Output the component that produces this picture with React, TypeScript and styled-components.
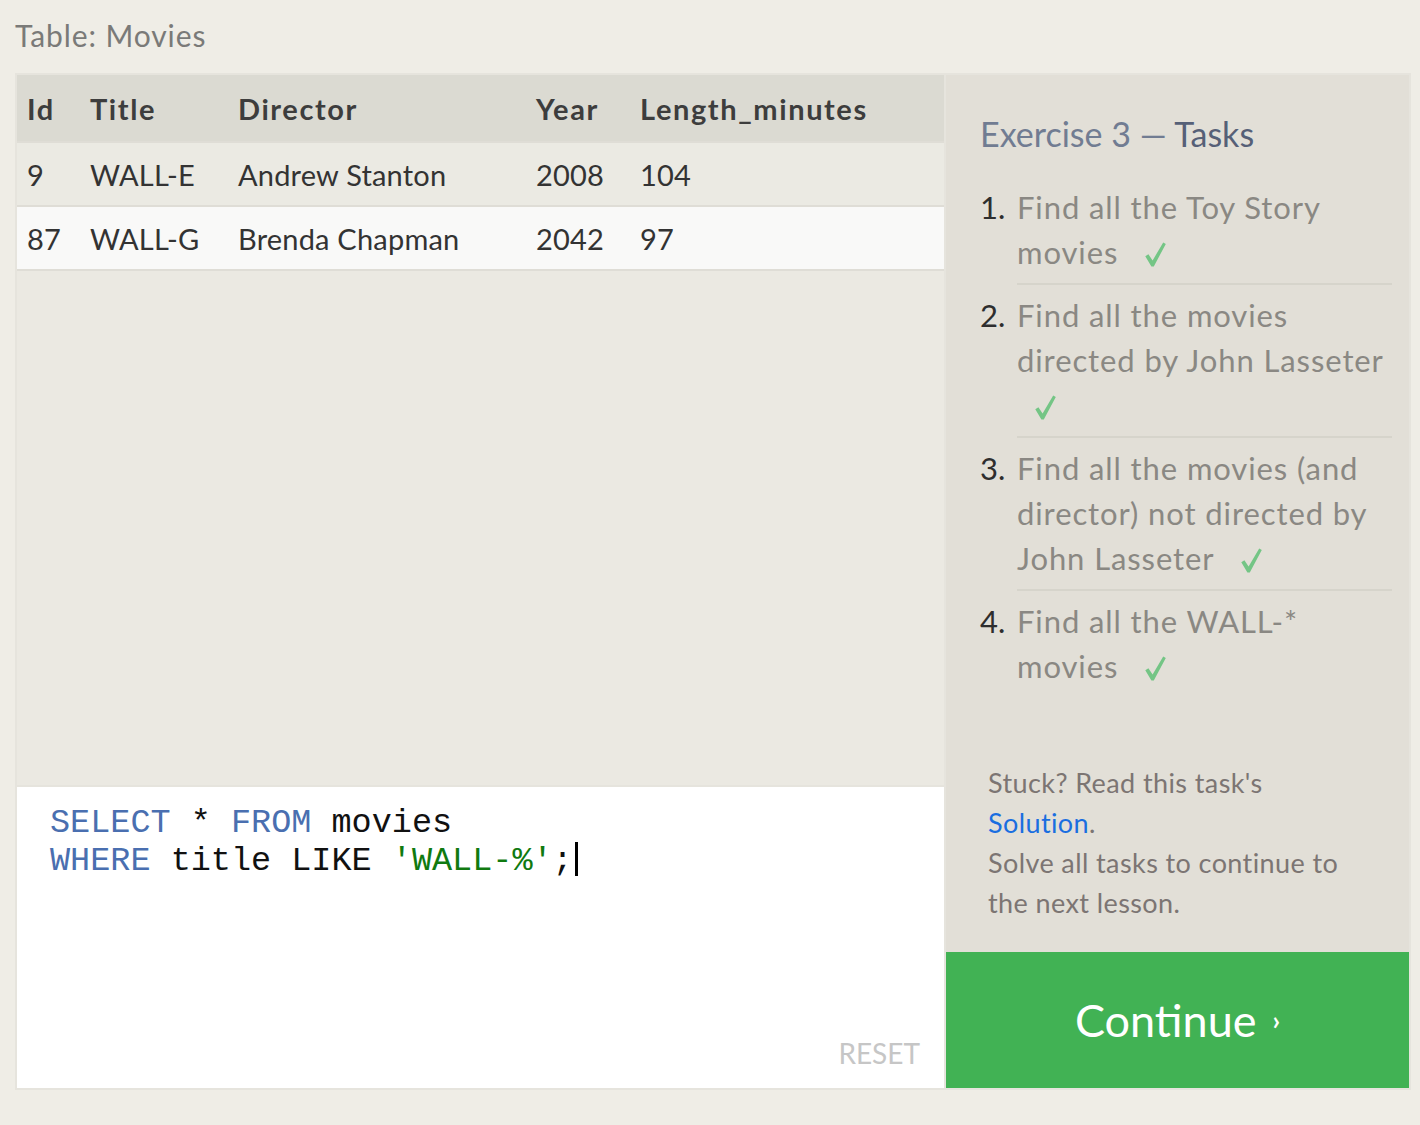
import React from "react";
import styled, { createGlobalStyle } from "styled-components";

const Global = createGlobalStyle`
  html, body { margin: 0; padding: 0; }
  body {
    background: #efede6;
    font-family: Lato, "Open Sans", sans-serif;
    width: 1420px;
    height: 1125px;
    overflow: hidden;
  }
`;

const Page = styled.div`
  padding: 14px 0 0 15px;
`;

const Caption = styled.div`
  font-size: 30px;
  letter-spacing: 0.9px;
  line-height: 42px;
  color: #7a7a78;
  height: 59px;
`;

const Frame = styled.div`
  width: 1392px;
  height: 1013px;
  border: 2px solid #e6e4dd;
  background: #e6e4dd;
  display: flex;
  gap: 2px;
`;

const LeftPanel = styled.div`
  width: 927px;
  display: flex;
  flex-direction: column;
  background: #ebe9e2;
`;

const Table = styled.table`
  width: 100%;
  border-collapse: collapse;
  font-size: 29px;
  color: #333;
`;

const HeadCell = styled.th<{ $w?: number }>`
  text-align: left;
  font-weight: 700;
  letter-spacing: 1.6px;
  background: #dbdad2;
  height: 66px;
  padding: 0 0 0 10px;
  width: ${(p) => (p.$w ? `${p.$w}px` : "auto")};
  color: #3d3d3d;
`;

const Row = styled.tr<{ $light?: boolean }>`
  background: ${(p) => (p.$light ? "#f9f9f8" : "#ebeae3")};
  border-top: 2px solid #dfddd6;
`;

const Cell = styled.td`
  height: 62px;
  padding: 0 0 0 10px;
  letter-spacing: 0.2px;
`;

const Empty = styled.div`
  flex: 1;
  border-top: 2px solid #dfddd6;
`;

const Editor = styled.div`
  height: 303px;
  background: #ffffff;
  border-top: 2px solid #e6e4dd;
  box-sizing: border-box;
  padding: 17px 24px 18px 33px;
  display: flex;
  flex-direction: column;
`;

const Code = styled.pre`
  margin: 0;
  flex: 1;
  font-family: "Liberation Mono", "Courier New", monospace;
  font-size: 33.5px;
  line-height: 38px;
  color: #111;
`;

const Kw = styled.span`
  color: #4a6fb0;
`;

const Str = styled.span`
  color: #107a10;
`;

const Caret = styled.span`
  display: inline-block;
  width: 3px;
  height: 34px;
  background: #000;
  vertical-align: -6px;
  margin-left: 2px;
`;

const Reset = styled.div`
  align-self: flex-end;
  font-size: 28px;
  color: #c6c6c6;
`;

const RightPanel = styled.div`
  flex: 1;
  display: flex;
  flex-direction: column;
  background: #e2dfd7;
`;

const TaskArea = styled.div`
  padding: 36px 17px 0 34px;
  flex: 1;
`;

const Heading = styled.h2`
  margin: 0 0 20px 0;
  font-size: 34px;
  font-weight: 400;
  line-height: 46px;
  color: #717c92;
`;

const HeadingStrong = styled.span`
  color: #566077;
`;

const List = styled.ol`
  margin: 0;
  padding: 0;
  list-style: none;
`;

const Item = styled.li<{ $last?: boolean }>`
  display: flex;
  font-size: 31px;
  letter-spacing: 0.9px;
  line-height: 45px;
  padding: 8px 0 ${(p) => (p.$last ? "0" : "8px")} 0;
`;

const Num = styled.span`
  width: 37px;
  flex: none;
  color: #2e2e2e;
  letter-spacing: 0;
`;

const ItemText = styled.span<{ $last?: boolean }>`
  flex: 1;
  color: #8a8883;
  padding-bottom: 8px;
  border-bottom: ${(p) => (p.$last ? "none" : "2px solid #d6d4cb")};
  margin-bottom: -8px;
`;

const CheckIcon = styled.svg`
  display: inline-block;
  margin-left: 18px;
  width: 21px;
  height: 25px;
  vertical-align: -3px;
`;

const Check = () => (
  <CheckIcon viewBox="0 0 21 25" aria-hidden="true">
    <path d="M0.3 14.2 L3.4 12.2 L7.6 18.4 L18.2 0.6 L20.8 2 L8.8 24.4 L6.4 24.4 Z" fill="#74c585" />
  </CheckIcon>
);

const Help = styled.div`
  padding: 0 51px 29px 42px;
  font-size: 27px;
  letter-spacing: 0.4px;
  line-height: 40px;
  color: #7c7573;
`;

const SolutionLink = styled.a`
  color: #1a6ee0;
  text-decoration: none;
`;

const ContinueButton = styled.div`
  height: 136px;
  background: #41b254;
  color: #ffffff;
  display: flex;
  align-items: center;
  justify-content: center;
  font-size: 45px;
  gap: 16px;
`;

const Chevron = styled.span`
  font-size: 26px;
  font-weight: 700;
`;

const tasks: { n: number; text: string }[] = [
  { n: 1, text: "Find all the Toy Story movies" },
  { n: 2, text: "Find all the movies directed by John Lasseter" },
  { n: 3, text: "Find all the movies (and director) not directed by John Lasseter" },
  { n: 4, text: "Find all the WALL-* movies" },
];

export default function App() {
  return (
    <Page>
      <Global />
      <Caption>Table: Movies</Caption>
      <Frame>
        <LeftPanel>
          <Table>
            <thead>
              <tr>
                <HeadCell $w={53}>Id</HeadCell>
                <HeadCell $w={138}>Title</HeadCell>
                <HeadCell $w={288}>Director</HeadCell>
                <HeadCell $w={94}>Year</HeadCell>
                <HeadCell>Length_minutes</HeadCell>
              </tr>
            </thead>
            <tbody>
              <Row>
                <Cell>9</Cell>
                <Cell>WALL-E</Cell>
                <Cell>Andrew Stanton</Cell>
                <Cell>2008</Cell>
                <Cell>104</Cell>
              </Row>
              <Row $light>
                <Cell>87</Cell>
                <Cell>WALL-G</Cell>
                <Cell>Brenda Chapman</Cell>
                <Cell>2042</Cell>
                <Cell>97</Cell>
              </Row>
            </tbody>
          </Table>
          <Empty />
          <Editor>
            <Code>
              <Kw>SELECT</Kw> * <Kw>FROM</Kw> movies{"\n"}
              <Kw>WHERE</Kw> title LIKE <Str>'WALL-%'</Str>;<Caret />
            </Code>
            <Reset>RESET</Reset>
          </Editor>
        </LeftPanel>
        <RightPanel>
          <TaskArea>
            <Heading>
              Exercise 3 — <HeadingStrong>Tasks</HeadingStrong>
            </Heading>
            <List>
              {tasks.map((t, i) => (
                <Item key={t.n} $last={i === tasks.length - 1}>
                  <Num>{t.n}.</Num>
                  <ItemText $last={i === tasks.length - 1}>
                    {t.text} <Check />
                  </ItemText>
                </Item>
              ))}
            </List>
          </TaskArea>
          <Help>
            Stuck? Read this task's <SolutionLink href="#">Solution</SolutionLink>.
            <br />
            Solve all tasks to continue to the next lesson.
          </Help>
          <ContinueButton>
            Continue <Chevron>›</Chevron>
          </ContinueButton>
        </RightPanel>
      </Frame>
    </Page>
  );
}
